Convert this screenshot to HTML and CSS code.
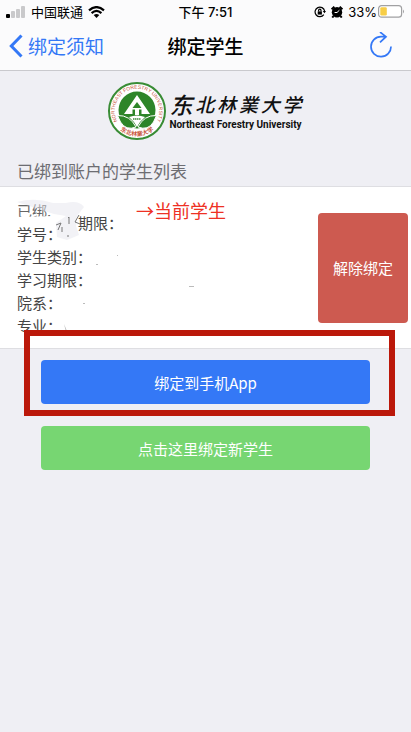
FILE: index.html
```html
<!DOCTYPE html>
<html lang="zh-CN">
<head>
<meta charset="utf-8">
<meta name="viewport" content="width=device-width, initial-scale=1">
<title>绑定学生</title>
<link rel="stylesheet" href="styles.css">
</head>
<body>
<header class="top">
  <div class="status">
    <div class="status-side">
      <svg class="signal" width="20" height="12" viewBox="0 0 20 12"><rect x="0" y="8" width="4" height="4" rx="1"/><g fill="#c9c9cb"><rect x="5" y="5" width="4" height="7" rx="1"/><rect x="10" y="3" width="4" height="9" rx="1"/><rect x="15" y="0" width="4" height="12" rx="1"/></g></svg>
      <span class="carrier">中国联通</span>
      <svg width="17" height="12" viewBox="0 0 17 12" fill="none" stroke="#000" stroke-width="2.2"><path d="M1 4.400Q8.500-2.200 16 4.400M3.600 7.100Q8.500 2.700 13.400 7.100"/><path d="M8.500 12L5.700 9Q8.500 6.800 11.300 9Z" fill="#000" stroke="none"/></svg>
    </div>
    <span class="time">下午 7:51</span>
    <div class="status-side status-right">
      <svg width="12" height="12" viewBox="0 0 12 12" fill="none" stroke="#000" stroke-width="1.200"><path d="M9.800 8.700A4.800 4.800 0 1 1 10.600 5"/><path d="M8.700 5H12L10.500 7.300Z" fill="#000" stroke="none"/><rect x="3.700" y="5.400" width="4.200" height="3.200" fill="#000" stroke="none"/><path d="M4.600 5.500V4.400a1.200 1.200 0 0 1 2.400 0v1.100"/></svg>
      <svg width="12" height="12" viewBox="0 0 12 12"><circle cx="6" cy="6.300" r="5.200"/><path d="M.6 3.300 3.400.7M11.400 3.300 8.600.7M2.500 10 1.300 11.600M9.500 10l1.200 1.600" stroke="#000" stroke-width="2"/><path d="M8.400 4.200 6 6.500H3.600" fill="none" stroke="#fff" stroke-width="1"/></svg>
      <span class="percent">33%</span>
      <svg class="battery" width="27" height="13" viewBox="0 0 27 13"><rect x=".6" y=".6" width="23" height="11.600" rx="3" fill="#fff" stroke="#a0a0a2" stroke-width="1.200"/><rect x="2.300" y="2.300" width="6.500" height="8.200" rx="1.300" fill="#f7cd46"/><path d="M25 4.500Q27 6.400 25 8.400Z" fill="#a0a0a2"/></svg>
    </div>
  </div>
  <nav class="nav">
    <a class="back" href="#">
      <svg width="14" height="24" viewBox="0 0 14 24" fill="none" stroke="#3478f6" stroke-width="3"><path d="M12.500 1.500 2.300 12l10.200 10.500"/></svg>
      <span>绑定须知</span>
    </a>
    <h1 class="title">绑定学生</h1>
    <button class="refresh" aria-label="刷新">
      <svg width="24" height="28" viewBox="0 0 24 28" fill="none" stroke="#3478f6" stroke-width="1.700"><path d="M22 14.500A10 10 0 1 1 12 4.700H16.500M11 0l6 4.700-6 5.600"/></svg>
    </button>
  </nav>
</header>
<main>
  <div class="brand">
    <svg class="seal" width="60" height="60" viewBox="0 0 60 60">
      <defs><path id="ring" d="M11.500 42.500A22.300 22.300 0 1 1 48.500 42.500"/><path id="base" d="M12 48A26.300 26.300 0 0 0 48 48"/></defs>
      <circle cx="30" cy="30" r="28" fill="#fff" stroke="#398c35" stroke-width="2"/>
      <circle cx="30" cy="29" r="18.500" fill="#2d8529"/>
      <path d="M30 14 17 33h8.500v-4.500H28V34h4v-5.500h2.500V33H43Z" fill="#fff"/><path d="m30 21-4.500 6h9Z" fill="#2d8529"/>
      <path d="M10.500 34.500Q23 34 29 46 19 50 13.500 41ZM49.500 34.500Q37 34 31 46 41 50 46.500 41Z" fill="#2d8529" stroke="#fff" stroke-width="1"/>
      <path d="M22 36Q30 33 38 36 33 40 30 46 27 40 22 36Z" fill="#fff"/>
      <path d="M26 38h8" stroke="#6fa86c" stroke-width="2" stroke-dasharray="1.500 .5"/>
      <text class="seal-latin"><textPath href="#ring" startOffset="50%" text-anchor="middle">NORTHEAST FORESTRY UNIVERSITY</textPath></text>
      <text class="seal-han"><textPath href="#base" startOffset="50%" text-anchor="middle">东北林業大学</textPath></text>
    </svg>
    <div class="wordmark">
      <div class="school"><span class="lead">东</span><span>北</span><span>林</span><span>業</span><span>大</span><span>学</span></div>
      <div class="latin">Northeast Forestry University</div>
    </div>
  </div>
  <h2 class="section">已绑到账户的学生列表</h2>
  <section class="card">
    <div class="details">
      <p class="faded">已绑.</p>
      <p>学号：</p>
      <p>学生类别：</p>
      <p>学习期限：</p>
      <p>院系：</p>
      <p>专业：</p>
      <span class="current">→当前学生</span>
      <svg class="smudge" width="190" height="140" viewBox="0 0 190 140">
        <path d="M0 3Q18-2 36 4L49 4Q62 1 67 8L60 17 59 27 62 36 50 41 40 38 39 24 49 17 37 15Z" fill="#e6e6ed" opacity=".5"/>
        <path d="M0 18 36 17 35 21H0Z" fill="#fff"/>
        <g fill="none" stroke="#777" stroke-width="1"><path d="M39 26l5-2-3 7M45 28v5M51 19l1-1v7M62 16l-4 7 5 2M50 37h2"/></g>
        <g fill="#bbb"><path d="M79 65h2v1h-2zM100 56h1v1h-1zM172 87h5v1h-5zM66 104h2v1h-2zM47 125l3 7 6 2-7-1z"/></g>
      </svg>
      <span class="term">期限：</span>
    </div>
    <button class="unbind">解除绑定</button>
  </section>
  <div class="actions">
    <div class="focus"><button class="action primary">绑定到手机App</button></div>
    <button class="action success">点击这里绑定新学生</button>
  </div>
</main>
</body>
</html>
```

FILE: styles.css
```css
* { box-sizing: border-box; }
body {
  margin: 0;
  min-height: 100vh;
  background: #efeff4;
  color: #444;
  font-family: "Noto Sans CJK SC", sans-serif;
}
h1, h2, p { margin: 0; font-weight: 400; }
button { font: inherit; border: 0; padding: 0; }
.top { background: #fbfbfc; border-bottom: 1px solid #c9c9cd; color: #000; }
.status {
  display: grid;
  grid-template-columns: 1fr auto 1fr;
  align-items: center;
  height: 23px;
  padding: 0 6px;
  font-size: 13px;
}
.status-side { display: flex; align-items: center; gap: 5px; }
.status-right { justify-content: flex-end; }
.time { font-family: Inter, "Noto Sans CJK SC", sans-serif; font-weight: 500; }
.percent { font-family: Inter, sans-serif; }
.battery { margin-left: -4px; }
.nav {
  display: grid;
  grid-template-columns: 1fr auto 1fr;
  align-items: center;
  height: 47px;
  padding: 0 9px 2px;
}
.back {
  display: flex;
  align-items: center;
  gap: 5px;
  color: #3478f6;
  font-size: 19px;
  line-height: 26px;
  text-decoration: none;
}
.title { color: #000; font-size: 19px; line-height: 26px; font-weight: 500; }
.refresh { justify-self: end; display: flex; padding-right: 9px; background: none; }
.brand {
  display: flex;
  justify-content: center;
  align-items: center;
  gap: 2px;
  height: 80px;
}
.seal { display: block; }
.seal-latin { font: 5px "Liberation Sans", sans-serif; fill: #c9553d; }
.seal-han { font: 700 6px "Noto Sans CJK SC", sans-serif; fill: #c9553d; }
.wordmark { padding-right: 2px; color: #111; }
.school {
  display: flex;
  justify-content: space-between;
  align-items: center;
  font-size: 19px;
  font-style: italic;
  font-weight: 500;
  line-height: 28px;
}
.lead { font-size: 23px; }
.latin {
  font: 700 10px/14px Roboto, sans-serif;
  white-space: nowrap;
}
.section { padding: 8px 17px 0; height: 35px; color: #6d6d72; font-size: 17px; line-height: 24px; }
.card {
  display: flex;
  justify-content: space-between;
  align-items: center;
  min-height: 163px;
  padding: 0 3px 0 17px;
  background: #fff;
  border-top: 1px solid #dedee2;
  border-bottom: 1px solid #dedee2;
}
.details { position: relative; flex: 1; font-size: 15px; line-height: 23px; }
.faded { color: #666; }
.current { position: absolute; top: 0; left: 119px; color: #ee3124; font-size: 18px; }
.smudge { position: absolute; top: 0; left: 0; }
.term { position: absolute; top: 12px; left: 61px; }
.unbind {
  width: 90px;
  height: 110px;
  border-radius: 4px;
  background: #cd5a50;
  color: #fff;
  font-size: 15px;
}
.actions { display: grid; gap: 22px; padding: 11px 41px; }
.focus { position: relative; }
.focus::after {
  content: "";
  position: absolute;
  inset: -30px -25px -12px -17px;
  border: 6px solid #bb180a;
  pointer-events: none;
}
.action { display: block; width: 100%; height: 44px; border-radius: 4px; color: #fff; font-size: 15px; }
.primary { background: #3478f6; }
.success { background: #77d672; }
```
